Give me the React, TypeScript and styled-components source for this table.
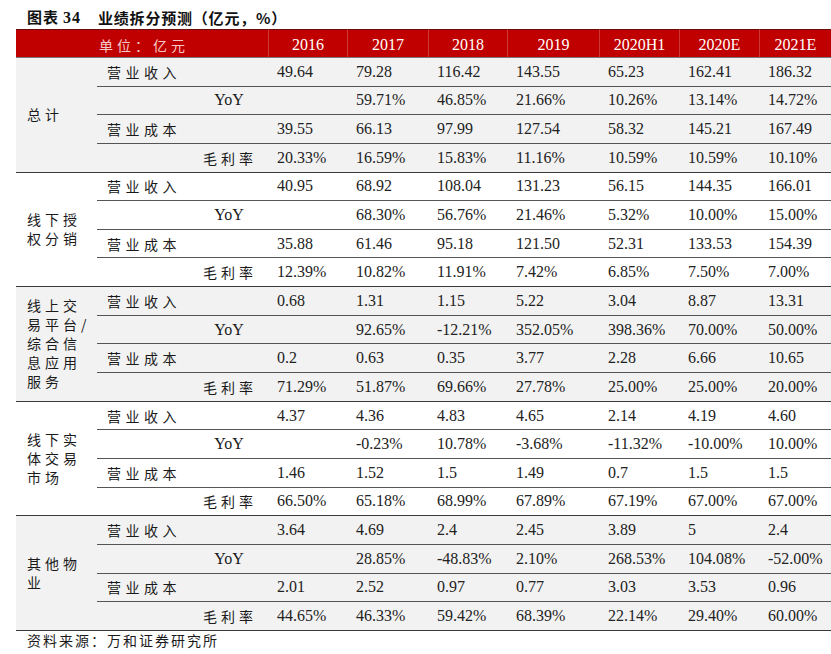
import React from 'react';
import styled, { createGlobalStyle } from 'styled-components';

const GlobalStyle = createGlobalStyle`
  html, body { margin: 0; padding: 0; background: #ffffff; }
  body { font-family: "Liberation Serif", "Noto Sans CJK SC", serif; color: #1f1f1f; }
`;

const CJK = `"Noto Sans CJK SC", "Noto Sans", sans-serif`;
const SERIF = `"Liberation Serif", "Noto Sans CJK SC", serif`;

const Page = styled.div`
  width: 831px;
  padding-left: 16px;
  box-sizing: border-box;
`;

const Title = styled.div`
  height: 29px;
  padding: 6px 0 0 11px;
  box-sizing: border-box;
  display: flex;
  align-items: center;
  line-height: 22px;
  font-family: ${CJK};
  font-weight: 700;
  font-size: 15px;
  color: #111;
`;

const TitleTag = styled.span`
  width: 71px;
  letter-spacing: 1px;
`;

const TitleNum = styled.span`
  font-family: ${SERIF};
  font-size: 16px;
  margin-left: 4px;
`;

const TitleText = styled.span`
  letter-spacing: 0.8px;
`;

const Grid = styled.div`
  display: grid;
  grid-template-columns: 81px 93px 78px 79px 81px 79px 92px 80px 80px 72px;
  grid-template-rows: 29px;
  grid-auto-rows: 28.65px;
`;

const HeadCell = styled.div<{ $span?: number; $sep?: boolean; $center?: boolean }>`
  grid-column: span ${(p) => p.$span ?? 1};
  background: #c00000;
  box-sizing: border-box;
  border-top: 1px solid #6b0d0d;
  border-bottom: 1px solid #7a7a7a;
  border-left: ${(p) => (p.$sep ? '1px solid rgba(255,255,255,0.22)' : 'none')};
  display: flex;
  align-items: center;
  justify-content: ${(p) => (p.$center ? 'center' : 'flex-start')};
  color: #ffffff;
  font-family: ${SERIF};
  font-size: 16px;
  padding-top: 2px;
`;

const HeadUnit = styled.span`
  font-family: ${CJK};
  font-size: 14px;
  letter-spacing: 4px;
  color: #f6c9c9;
  padding-left: 2px;
`;

const GroupCell = styled.div<{ $shade: boolean }>`
  grid-row: span 4;
  background: ${(p) => (p.$shade ? '#f2f2f2' : '#ffffff')};
  border-bottom: 1px solid #3a3a3a;
  box-sizing: border-box;
  display: flex;
  flex-direction: column;
  justify-content: center;
  padding-left: 11px;
  font-family: ${CJK};
  font-size: 14px;
  line-height: 19px;
  letter-spacing: 4px;
  color: #1a1a1a;
`;

const Cell = styled.div<{ $shade: boolean; $last: boolean }>`
  background: ${(p) => (p.$shade ? '#f2f2f2' : '#ffffff')};
  border-bottom: 1px solid ${(p) => (p.$last ? '#3a3a3a' : '#555555')};
  box-sizing: border-box;
  display: flex;
  align-items: center;
  min-width: 0;
  white-space: nowrap;
`;

const MainLabel = styled(Cell)`
  padding-left: 10px;
  font-family: ${CJK};
  font-size: 14px;
  letter-spacing: 4.5px;
  color: #1a1a1a;
`;

const SubLabel = styled(Cell)<{ $cjk: boolean }>`
  justify-content: center;
  padding-left: ${(p) => (p.$cjk ? '2px' : '0')};
  font-family: ${(p) => (p.$cjk ? CJK : SERIF)};
  font-size: ${(p) => (p.$cjk ? '14px' : '16px')};
  letter-spacing: ${(p) => (p.$cjk ? '4px' : '0')};
  color: #1a1a1a;
`;

const NumCell = styled(Cell)`
  padding-left: 9px;
  font-family: ${SERIF};
  font-size: 16px;
  color: #222222;
`;

const Footer = styled.div`
  padding-left: 11px;
  font-family: ${CJK};
  font-size: 14px;
  line-height: 19px;
  letter-spacing: 2px;
  color: #1a1a1a;
`;

type Group = { label: string[]; rows: string[][] };

const years = ['2016', '2017', '2018', '2019', '2020H1', '2020E', '2021E'];
const rowNames = ['营业收入', 'YoY', '营业成本', '毛利率'];

const groups: Group[] = [
  {
    label: ['总计'],
    rows: [
      ['49.64', '79.28', '116.42', '143.55', '65.23', '162.41', '186.32'],
      ['', '59.71%', '46.85%', '21.66%', '10.26%', '13.14%', '14.72%'],
      ['39.55', '66.13', '97.99', '127.54', '58.32', '145.21', '167.49'],
      ['20.33%', '16.59%', '15.83%', '11.16%', '10.59%', '10.59%', '10.10%'],
    ],
  },
  {
    label: ['线下授', '权分销'],
    rows: [
      ['40.95', '68.92', '108.04', '131.23', '56.15', '144.35', '166.01'],
      ['', '68.30%', '56.76%', '21.46%', '5.32%', '10.00%', '15.00%'],
      ['35.88', '61.46', '95.18', '121.50', '52.31', '133.53', '154.39'],
      ['12.39%', '10.82%', '11.91%', '7.42%', '6.85%', '7.50%', '7.00%'],
    ],
  },
  {
    label: ['线上交', '易平台/', '综合信', '息应用', '服务'],
    rows: [
      ['0.68', '1.31', '1.15', '5.22', '3.04', '8.87', '13.31'],
      ['', '92.65%', '-12.21%', '352.05%', '398.36%', '70.00%', '50.00%'],
      ['0.2', '0.63', '0.35', '3.77', '2.28', '6.66', '10.65'],
      ['71.29%', '51.87%', '69.66%', '27.78%', '25.00%', '25.00%', '20.00%'],
    ],
  },
  {
    label: ['线下实', '体交易', '市场'],
    rows: [
      ['4.37', '4.36', '4.83', '4.65', '2.14', '4.19', '4.60'],
      ['', '-0.23%', '10.78%', '-3.68%', '-11.32%', '-10.00%', '10.00%'],
      ['1.46', '1.52', '1.5', '1.49', '0.7', '1.5', '1.5'],
      ['66.50%', '65.18%', '68.99%', '67.89%', '67.19%', '67.00%', '67.00%'],
    ],
  },
  {
    label: ['其他物', '业'],
    rows: [
      ['3.64', '4.69', '2.4', '2.45', '3.89', '5', '2.4'],
      ['', '28.85%', '-48.83%', '2.10%', '268.53%', '104.08%', '-52.00%'],
      ['2.01', '2.52', '0.97', '0.77', '3.03', '3.53', '0.96'],
      ['44.65%', '46.33%', '59.42%', '68.39%', '22.14%', '29.40%', '60.00%'],
    ],
  },
];

export default function App() {
  return (
    <Page>
      <GlobalStyle />
      <Title>
        <TitleTag>
          图表<TitleNum>34</TitleNum>
        </TitleTag>
        <TitleText>业绩拆分预测（亿元，%）</TitleText>
      </Title>
      <Grid>
        <HeadCell />
        <HeadCell $span={2}>
          <HeadUnit>单位：亿元</HeadUnit>
        </HeadCell>
        {years.map((y) => (
          <HeadCell key={y} $sep $center>
            {y}
          </HeadCell>
        ))}
        {groups.map((g, gi) => {
          const shade = gi % 2 === 0;
          return (
            <React.Fragment key={gi}>
              <GroupCell $shade={shade} style={{ gridRow: `${gi * 4 + 2} / span 4` }}>
                {g.label.map((l) => (
                  <span key={l}>{l}</span>
                ))}
              </GroupCell>
              {g.rows.map((r, ri) => {
                const last = ri === 3;
                const isMain = ri % 2 === 0;
                return (
                  <React.Fragment key={ri}>
                    <MainLabel $shade={shade} $last={last}>
                      {isMain ? rowNames[ri] : ''}
                    </MainLabel>
                    <SubLabel $shade={shade} $last={last} $cjk={ri === 3}>
                      {isMain ? '' : rowNames[ri]}
                    </SubLabel>
                    {r.map((v, vi) => (
                      <NumCell key={vi} $shade={shade} $last={last}>
                        {v}
                      </NumCell>
                    ))}
                  </React.Fragment>
                );
              })}
            </React.Fragment>
          );
        })}
      </Grid>
      <Footer>资料来源：万和证券研究所</Footer>
    </Page>
  );
}
